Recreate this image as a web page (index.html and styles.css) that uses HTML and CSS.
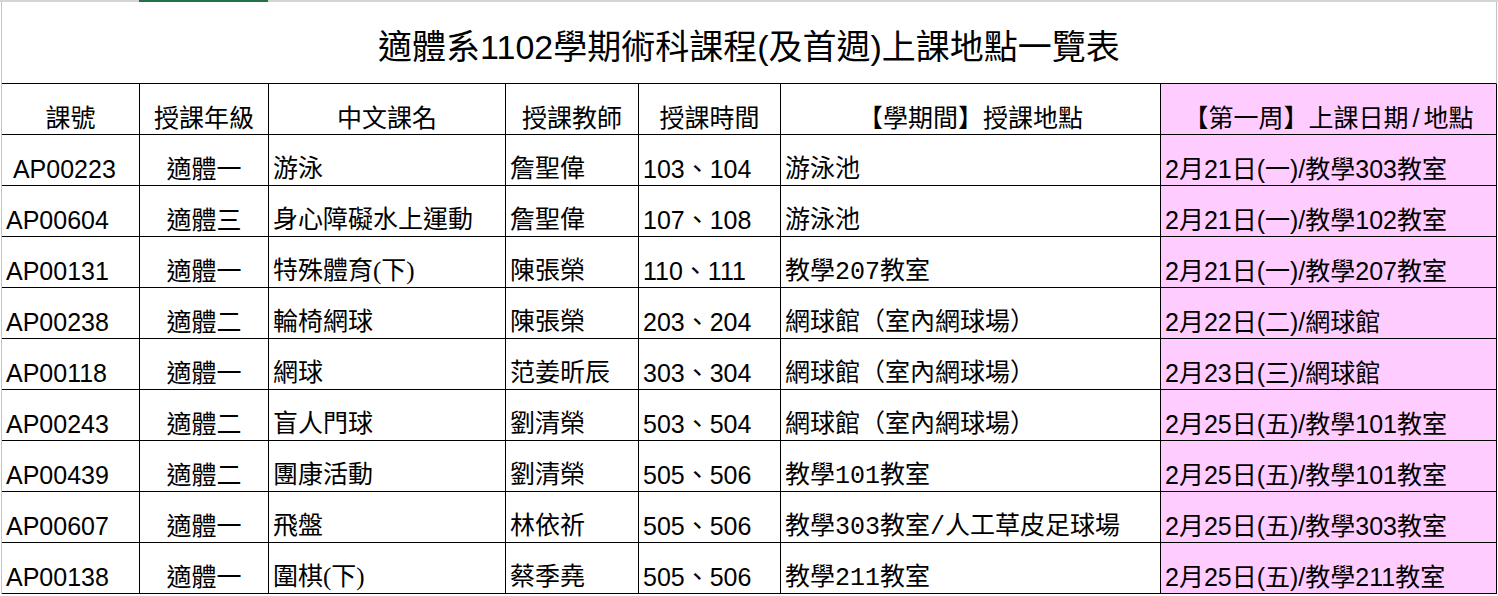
FILE: index.html
```html
<!DOCTYPE html>
<html lang="zh-Hant">
<head>
<meta charset="utf-8">
<title>適體系1102學期術科課程上課地點一覽表</title>
<link rel="stylesheet" href="styles.css">
</head>
<body>
<div class="sheet">
  <div class="strip"><span class="strip-sel"></span></div>
  <div class="grid">
    <div class="title">適體系1102學期術科課程(及首週)上課地點一覽表</div>

    <div class="cell head">課號</div>
    <div class="cell head">授課年級</div>
    <div class="cell head">中文課名</div>
    <div class="cell head">授課教師</div>
    <div class="cell head">授課時間</div>
    <div class="cell head">【學期間】授課地點</div>
    <div class="cell head pink">【第一周】上課日期<span class="slash">/</span>地點</div>

    <div class="cell">&nbsp;AP00223</div>
    <div class="cell mid">適體一</div>
    <div class="cell ming">游泳</div>
    <div class="cell ming">詹聖偉</div>
    <div class="cell">103、104</div>
    <div class="cell mono">游泳池</div>
    <div class="cell pink">2月21日(一)/教學303教室</div>

    <div class="cell">AP00604</div>
    <div class="cell mid">適體三</div>
    <div class="cell ming">身心障礙水上運動</div>
    <div class="cell ming">詹聖偉</div>
    <div class="cell">107、108</div>
    <div class="cell mono">游泳池</div>
    <div class="cell pink">2月21日(一)/教學102教室</div>

    <div class="cell">AP00131</div>
    <div class="cell mid">適體一</div>
    <div class="cell ming">特殊體育(下)</div>
    <div class="cell ming">陳張榮</div>
    <div class="cell">110、111</div>
    <div class="cell mono">教學207教室</div>
    <div class="cell pink">2月21日(一)/教學207教室</div>

    <div class="cell">AP00238</div>
    <div class="cell mid">適體二</div>
    <div class="cell ming">輪椅網球</div>
    <div class="cell ming">陳張榮</div>
    <div class="cell">203、204</div>
    <div class="cell mono">網球館（室內網球場）</div>
    <div class="cell pink">2月22日(二)/網球館</div>

    <div class="cell">AP00118</div>
    <div class="cell mid">適體一</div>
    <div class="cell ming">網球</div>
    <div class="cell ming">范姜昕辰</div>
    <div class="cell">303、304</div>
    <div class="cell mono">網球館（室內網球場）</div>
    <div class="cell pink">2月23日(三)/網球館</div>

    <div class="cell">AP00243</div>
    <div class="cell mid">適體二</div>
    <div class="cell ming">盲人門球</div>
    <div class="cell ming">劉清榮</div>
    <div class="cell">503、504</div>
    <div class="cell mono">網球館（室內網球場）</div>
    <div class="cell pink">2月25日(五)/教學101教室</div>

    <div class="cell">AP00439</div>
    <div class="cell mid">適體二</div>
    <div class="cell ming">團康活動</div>
    <div class="cell ming">劉清榮</div>
    <div class="cell">505、506</div>
    <div class="cell mono">教學101教室</div>
    <div class="cell pink">2月25日(五)/教學101教室</div>

    <div class="cell">AP00607</div>
    <div class="cell mid">適體一</div>
    <div class="cell ming">飛盤</div>
    <div class="cell ming">林依祈</div>
    <div class="cell">505、506</div>
    <div class="cell mono">教學303教室/人工草皮足球場</div>
    <div class="cell pink">2月25日(五)/教學303教室</div>

    <div class="cell">AP00138</div>
    <div class="cell mid">適體一</div>
    <div class="cell ming">圍棋(下)</div>
    <div class="cell ming">蔡季堯</div>
    <div class="cell">505、506</div>
    <div class="cell mono">教學211教室</div>
    <div class="cell pink">2月25日(五)/教學211教室</div>
  </div>
</div>
</body>
</html>
```

FILE: styles.css
```css
* {
  box-sizing: border-box;
}

html, body {
  margin: 0;
  padding: 0;
  background: #ffffff;
}

body {
  font-family: "Liberation Sans", "Noto Sans CJK TC", sans-serif;
  color: #000000;
  overflow: hidden;
}

.sheet {
  width: 1498px;
}

.strip {
  display: flex;
  height: 2px;
  background: #d4d4d4;
}

.strip-sel {
  margin-left: 139px;
  width: 129px;
  height: 2px;
  background: #217346;
}

.grid {
  display: grid;
  grid-template-columns: 138px 129px 237px 133px 142px 380px 336px;
  grid-template-rows: 82px;
  grid-auto-rows: 51px;
  margin-left: 1px;
  border-left: 1px solid #c4c4c4;
  width: fit-content;
}

.title {
  grid-column: 1 / -1;
  display: flex;
  align-items: center;
  justify-content: center;
  padding-top: 8px;
  border-bottom: 1px solid #000000;
  border-right: 1px solid #c4c4c4;
  font-size: 34px;
  line-height: 40px;
  white-space: nowrap;
}

.cell {
  display: flex;
  align-items: flex-end;
  padding: 0 4px 1px 4px;
  border-right: 1px solid #000000;
  border-bottom: 1px solid #000000;
  font-size: 25px;
  line-height: 30px;
  white-space: nowrap;
  overflow: hidden;
}

.head {
  justify-content: center;
  padding-bottom: 1px;
}

.mid {
  justify-content: center;
}

.ming {
  font-family: "Liberation Serif", "Noto Sans CJK TC", serif;
}

.mono {
  font-family: "Liberation Mono", "Noto Sans CJK TC", monospace;
  line-height: 26px;
}

.slash {
  padding: 0 4px;
}

.pink {
  background: #ffccff;
}
```
